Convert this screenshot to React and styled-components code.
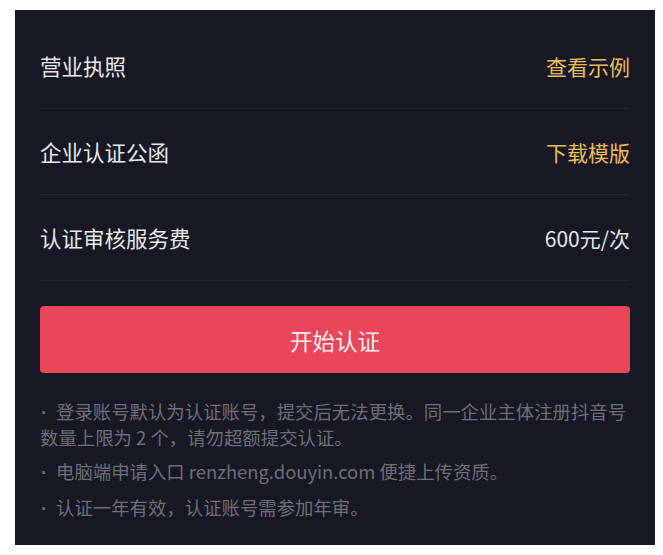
import React from 'react';
import styled, { createGlobalStyle } from 'styled-components';

const GlobalStyle = createGlobalStyle`
  body {
    margin: 0;
    background: #ffffff;
    font-family: "Noto Sans CJK SC", "Noto Sans", sans-serif;
  }
`;

const rows = [
    { label: '营业执照', value: '查看示例', link: true },
    { label: '企业认证公函', value: '下载模版', link: true },
    { label: '认证审核服务费', value: '600元/次', link: false },
];

const notes = [
    '登录账号默认为认证账号，提交后无法更换。同一企业主体注册抖音号数量上限为 2 个，请勿超额提交认证。',
    '电脑端申请入口 renzheng.douyin.com 便捷上传资质。',
    '认证一年有效，认证账号需参加年审。',
];

function App() {
    return (
        <Page>
            <GlobalStyle />
            <Panel>
                <List>
                    {rows.map((r) => (
                        <Row key={r.label}>
                            <Label>{r.label}</Label>
                            <Value $link={r.link}>{r.value}</Value>
                        </Row>
                    ))}
                </List>
                <Submit type="button">开始认证</Submit>
                <Notes>
                    {notes.map((n) => (
                        <Note key={n}>{n}</Note>
                    ))}
                </Notes>
            </Panel>
        </Page>
    );
}

export default App;

const Page = styled.div`
  padding: 10px 8px 10px 15px;
`

const Panel = styled.div`
  width: 640px;
  height: 535px;
  box-sizing: border-box;
  background: #161823;
  padding: 13px 25px 0 25px;
  display: flex;
  flex-direction: column;
`

const List = styled.div`
  display: flex;
  flex-direction: column;
`

const Row = styled.div`
  height: 86px;
  box-sizing: border-box;
  border-bottom: 1px solid #22242f;
  display: flex;
  align-items: center;
  justify-content: space-between;
`

const Label = styled.span`
  font-size: 21.5px;
  color: #e9e9ec;
`

const Value = styled.span`
  font-size: 21px;
  color: ${(p) => (p.$link ? '#ecbd5a' : '#e9e9ec')};
`

const Submit = styled.button`
  margin-top: 25px;
  height: 67px;
  width: 100%;
  border: none;
  border-radius: 4px;
  background: #ea455b;
  color: #fbeef0;
  font-family: inherit;
  font-size: 22.5px;
  cursor: pointer;
`

const Notes = styled.div`
  margin-top: 26px;
  display: flex;
  flex-direction: column;
  gap: 10px;
`

const Note = styled.p`
  margin: 0;
  font-size: 18.4px;
  line-height: 24px;
  color: #6d6f78;

  &::before {
    content: "·";
    display: inline-block;
    width: 16px;
    padding-left: 1px;
    box-sizing: border-box;
    font-family: "Liberation Sans", sans-serif;
    font-weight: bold;
  }
`
